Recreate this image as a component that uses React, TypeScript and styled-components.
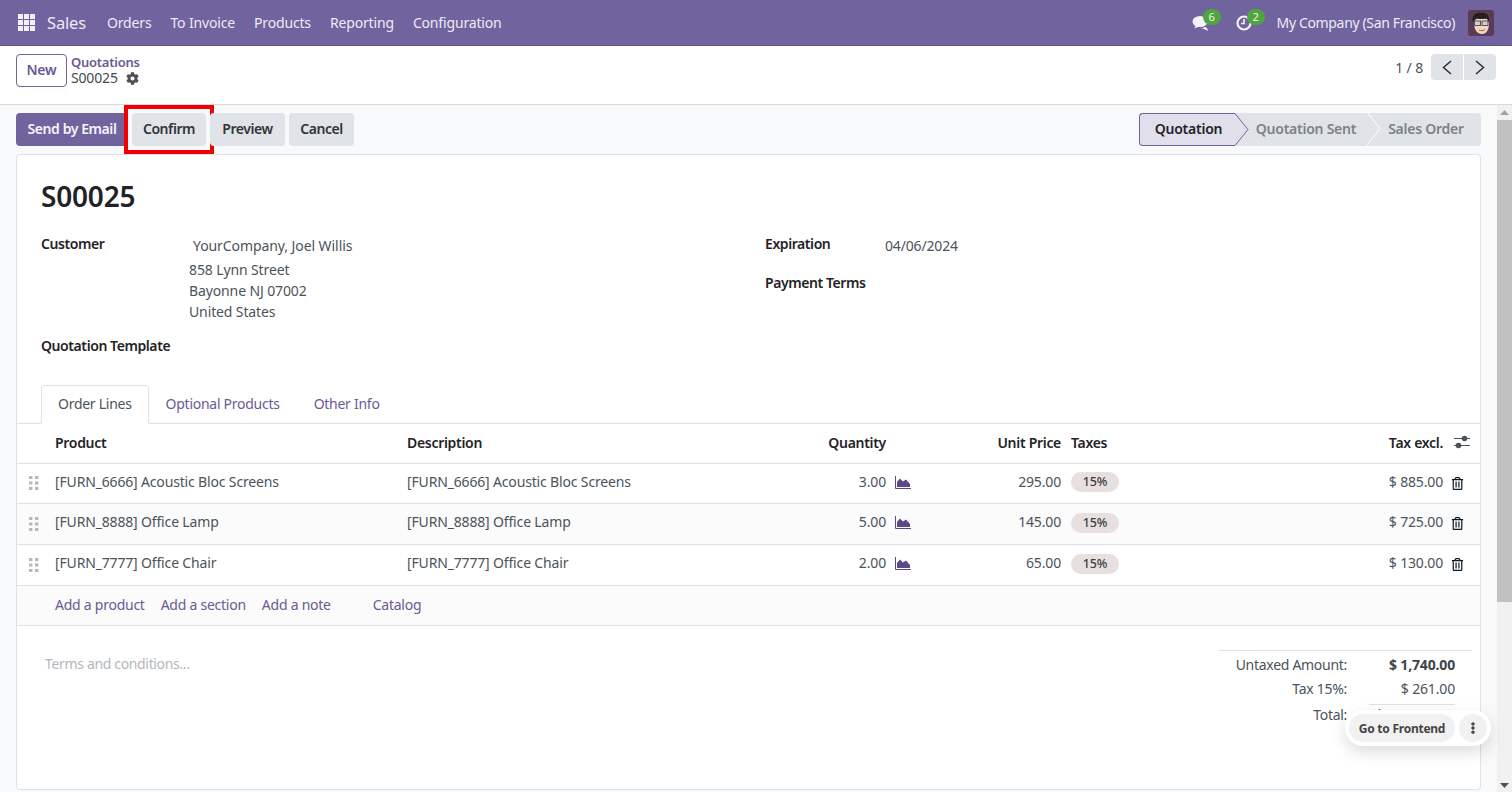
import React from "react";
import styled, { createGlobalStyle } from "styled-components";
import { FaCog, FaEllipsisV, FaRegTrashAlt } from "react-icons/fa";

const purple = "#71639e";
const linkPurple = "#6a5a94";
const text = "#4b535b";
const dark = "#1f2327";
const line = "#dee2e6";

const GlobalStyle = createGlobalStyle`
  * { box-sizing: border-box; }
  html, body { margin: 0; height: 100%; overflow: hidden; }
  body {
    font-family: "Noto Sans", "Open Sans", sans-serif;
    font-size: 14px;
    letter-spacing: -0.16px;
    color: ${text};
    background: #fff;
  }
`;

const Page = styled.div`
  width: 1512px;
  height: 792px;
  display: flex;
  flex-direction: column;
  position: relative;
  overflow: hidden;
`;

const Navbar = styled.header`
  height: 46px;
  flex: none;
  background: ${purple};
  border-bottom: 1px solid #64578e;
  display: flex;
  align-items: center;
  padding: 0 18px;
  color: #eeeaf5;
`;

const AppsIcon = styled.svg`
  width: 17px;
  height: 17px;
  fill: #f2eff7;
  margin-right: 12px;
`;

const Brand = styled.span`
  font-size: 16.5px;
  margin-right: 21px;
`;

const NavLinks = styled.nav`
  display: flex;
  gap: 19px;
`;

const NavLink = styled.span`
  font-size: 14px;
`;

const NavRight = styled.div`
  margin-left: auto;
  display: flex;
  align-items: center;
`;

const NavIcons = styled.div`
  display: flex;
  gap: 24px;
  margin-right: 21px;
`;

const NavIcon = styled.span`
  position: relative;
  display: flex;
  width: 20px;
  height: 18px;
`;

const Badge = styled.span`
  position: absolute;
  top: -5px;
  left: 11px;
  width: 18px;
  height: 16px;
  border-radius: 8px;
  background: #4fa53f;
  color: #f2f7ee;
  font-size: 11px;
  line-height: 15px;
  text-align: center;
`;

const CompanyName = styled.span`
  margin-right: 13px;
  letter-spacing: -0.35px;
`;

const ControlPanel = styled.div`
  height: 59px;
  flex: none;
  background: #fff;
  border-bottom: 1px solid #d8dadd;
  display: flex;
  align-items: flex-start;
  padding: 8px 16px 0;
`;

const NewButton = styled.button`
  height: 33px;
  width: 51px;
  border: 1px solid ${purple};
  border-radius: 4px;
  background: #fff;
  color: ${linkPurple};
  font: inherit;
  font-weight: 600;
  letter-spacing: inherit;
  padding: 0 0 2px;
`;

const Breadcrumb = styled.div`
  margin-left: 4px;
  display: flex;
  flex-direction: column;
  line-height: 16px;
`;

const CrumbLink = styled.span`
  color: ${linkPurple};
  font-weight: 600;
  font-size: 13px;
  letter-spacing: -0.25px;
`;

const CrumbCurrent = styled.span`
  display: flex;
  align-items: center;
  gap: 8px;
  color: #444b52;
`;

const Pager = styled.div`
  margin-left: auto;
  display: flex;
  align-items: center;
  gap: 8px;
  height: 26px;
`;

const PagerButtons = styled.div`
  display: flex;
  gap: 1px;
`;

const PagerButton = styled.span<{ $side: "left" | "right" }>`
  width: 32px;
  height: 26px;
  background: #e0e3e7;
  display: flex;
  align-items: center;
  justify-content: center;
  border-radius: ${(p) => (p.$side === "left" ? "4px 0 0 4px" : "0 4px 4px 0")};
`;

const Body = styled.div`
  flex: 1;
  min-height: 0;
  display: flex;
  background: #f8f9fb;
`;

const Main = styled.main`
  flex: 1;
  min-width: 0;
  padding: 8px 16px 2px;
  display: flex;
  flex-direction: column;
  gap: 8px;
`;

const StatusBar = styled.div`
  display: flex;
  justify-content: space-between;
  flex: none;
`;

const ActionButtons = styled.div`
  display: flex;
  gap: 4px;
`;

const ActionButton = styled.button<{ $width: number; $primary?: boolean }>`
  position: relative;
  width: ${(p) => p.$width}px;
  height: 33px;
  padding: 0 0 2px;
  border: 0;
  border-radius: 4px;
  font: inherit;
  font-weight: 600;
  letter-spacing: -0.42px;
  background: ${(p) => (p.$primary ? purple : "#e0e3e7")};
  color: ${(p) => (p.$primary ? "#f6f4fa" : "#2f353a")};
`;

const RedBox = styled.span`
  position: absolute;
  inset: -8px;
  border: 4px solid #f00000;
  pointer-events: none;
`;

const Steps = styled.div`
  display: flex;
  height: 33px;
  width: 342px;
  background: #e0e3e7;
  border-radius: 4px;
`;

const Step = styled.span<{ $width: number; $inset: number; $active?: boolean }>`
  position: relative;
  width: ${(p) => p.$width}px;
  display: flex;
  align-items: center;
  justify-content: center;
  padding: 0 0 2px ${(p) => p.$inset}px;
  font-weight: 600;
  letter-spacing: -0.25px;
  color: ${(p) => (p.$active ? dark : "#7b8289")};
  background: ${(p) => (p.$active ? "#e2dfec" : "transparent")};
  ${(p) => (p.$active ? `border: 1px solid ${purple}; border-right: 0; border-radius: 4px 0 0 4px;` : "")}
`;

const StepArrow = styled.svg`
  position: absolute;
  top: -1px;
  right: -14px;
  width: 14px;
  height: 33px;
  z-index: 1;
`;

const Sheet = styled.section`
  flex: 1;
  min-height: 0;
  background: #fff;
  border: 1px solid ${line};
  border-radius: 4px;
  display: flex;
  flex-direction: column;
`;

const Title = styled.h1`
  margin: 22px 0 0 24px;
  font-size: 28px;
  line-height: 38px;
  font-weight: 600;
  letter-spacing: -0.2px;
  color: ${dark};
`;

const FormGrid = styled.div`
  display: grid;
  grid-template-columns: 724px 1fr;
  padding: 0 24px;
  margin-top: 19px;
  height: 151px;
`;

const FormColumn = styled.div`
  display: flex;
  flex-direction: column;
`;

const Field = styled.div<{ $labelWidth: number; $height: number }>`
  display: grid;
  grid-template-columns: ${(p) => p.$labelWidth}px 1fr;
  height: ${(p) => p.$height}px;
`;

const Label = styled.span`
  font-weight: 600;
  letter-spacing: -0.42px;
  color: ${dark};
  line-height: 20px;
  white-space: nowrap;
`;

const CustomerName = styled.div`
  padding-left: 4px;
  line-height: 20px;
  letter-spacing: -0.08px;
  margin: 2px 0 3px;
`;

const Address = styled.div`
  line-height: 21px;
  letter-spacing: -0.12px;
`;

const FieldValue = styled.span`
  line-height: 20px;
  margin-top: 2px;
`;

const Tabs = styled.div`
  display: flex;
  padding-left: 24px;
  height: 39px;
  flex: none;
  border-bottom: 1px solid ${line};
`;

const Tab = styled.span<{ $active?: boolean }>`
  height: 39px;
  padding: 0 16px 2px;
  display: flex;
  align-items: center;
  border-radius: 4px 4px 0 0;
  letter-spacing: -0.27px;
  color: ${(p) => (p.$active ? text : linkPurple)};
  background: ${(p) => (p.$active ? "#fff" : "transparent")};
  border: 1px solid ${(p) => (p.$active ? line : "transparent")};
  border-bottom-color: ${(p) => (p.$active ? "#fff" : "transparent")};
`;

const Lines = styled.table`
  width: 1463px;
  table-layout: fixed;
  border-collapse: collapse;
  flex: none;
`;

const HeadCell = styled.th<{ $align?: string; $flush?: boolean }>`
  height: 39px;
  padding: 0 8px 2px;
  padding-left: ${(p) => (p.$flush ? "2px" : "8px")};
  text-align: ${(p) => p.$align || "left"};
  font-weight: 600;
  letter-spacing: -0.3px;
  color: ${dark};
  border-bottom: 1px solid ${line};
`;

const Row = styled.tr<{ $striped?: boolean }>`
  height: 41px;
  background: ${(p) => (p.$striped ? "#fbfbfb" : "#fff")};
  border-bottom: 1px solid ${line};
  &:first-child {
    height: 40px;
  }
`;

const Cell = styled.td<{ $align?: string; $flush?: boolean }>`
  padding: 0 8px 4px;
  padding-left: ${(p) => (p.$flush ? "2px" : "8px")};
  text-align: ${(p) => p.$align || "left"};
  white-space: nowrap;
`;

const TagCell = styled.td`
  padding: 0 0 2px 2px;
`;

const HandleCell = styled.td`
  padding: 0 0 2px;
`;

const IconCell = styled.td<{ $color: string }>`
  padding: 0 0 2px 1px;
  color: ${(p) => p.$color};
  svg {
    display: block;
  }
`;

const TrashCell = styled.td`
  padding: 0;
  color: #0c1a26;
  svg {
    display: block;
  }
`;

const TaxTag = styled.span`
  display: block;
  width: 48px;
  height: 20px;
  border-radius: 10px;
  background: #e7e0de;
  color: #3b4046;
  font-size: 12.5px;
  font-weight: 500;
  line-height: 20px;
  text-align: center;
`;

const HandleIcon = styled.svg`
  width: 10px;
  height: 14px;
  fill: #b5b9bd;
  display: block;
  margin: 2px 0 0 12px;
`;

const SlidersIcon = styled.svg`
  display: block;
  width: 16px;
  height: 14px;
  margin-left: -5px;
`;

const ChartIcon = styled.svg`
  width: 16px;
  height: 13px;
`;

const AddRow = styled.div`
  height: 40px;
  flex: none;
  display: flex;
  align-items: center;
  padding: 0 0 2px 38px;
  gap: 16px;
  letter-spacing: -0.25px;
  background: #fbfbfb;
  border-bottom: 1px solid ${line};
  color: ${linkPurple};
`;

const CatalogLink = styled.span`
  margin-left: 26px;
`;

const Footer = styled.div`
  flex: 1;
  min-height: 0;
  display: flex;
  justify-content: space-between;
  padding: 24px 8px 0 28px;
`;

const Terms = styled.span`
  color: #b4b7ba;
  line-height: 28px;
  letter-spacing: -0.34px;
`;

const Totals = styled.div`
  width: 253px;
  border-top: 1px solid ${line};
  padding: 2px 17px 0 0;
`;

const TotalRow = styled.div`
  display: grid;
  grid-template-columns: 128px 1fr;
  height: 24px;
  line-height: 24px;
  white-space: nowrap;
`;

const TotalLabel = styled.span`
  text-align: right;
  letter-spacing: -0.29px;
`;

const TotalValue = styled.span<{ $bold?: boolean; $large?: boolean }>`
  text-align: right;
  font-weight: ${(p) => (p.$bold ? 700 : 400)};
  font-size: ${(p) => (p.$large ? "17px" : "14px")};
  margin-top: ${(p) => (p.$large ? "2px" : "0")};
  color: ${(p) => (p.$bold ? "#3d444a" : text)};
`;

const TotalRule = styled.div`
  margin: 3px 0 -2px 150px;
  border-top: 1px solid ${line};
`;

const Scrollbar = styled.aside`
  width: 15px;
  flex: none;
  background: #f1f1f1;
  display: flex;
  flex-direction: column;
  align-items: center;
  justify-content: space-between;
  padding: 5px 0 4px;
`;

const ScrollArrow = styled.svg`
  width: 9px;
  height: 5px;
  fill: ${(p) => p.color};
`;

const ScrollThumb = styled.span`
  width: 100%;
  height: 482px;
  background: #c1c1c1;
  margin: 5px 0 auto;
`;

const FrontendPopup = styled.div`
  position: absolute;
  left: 1345px;
  top: 710px;
  width: 146px;
  height: 36px;
  background: #fff;
  border-radius: 18px;
  box-shadow: 0 6px 16px rgba(0, 0, 0, 0.14);
  display: flex;
  align-items: center;
  padding: 0 4px;
  gap: 4px;
`;

const FrontendButton = styled.span`
  width: 106px;
  height: 28px;
  border-radius: 14px;
  background: #f1f1f1;
  color: #444;
  font-size: 12px;
  font-weight: 700;
  letter-spacing: -0.25px;
  display: flex;
  align-items: center;
  justify-content: center;
`;

const MoreButton = styled.span`
  width: 28px;
  height: 28px;
  border-radius: 50%;
  background: #f1f1f1;
  color: #444;
  display: flex;
  align-items: center;
  justify-content: center;
`;

const Avatar = () => (
  <svg width="26" height="26" viewBox="0 0 26 26">
    <rect width="26" height="26" rx="3" fill="#5b3a56" />
    <path d="M6 12c0 8 3 12 8 12s7-5 7-11l-2-4H8z" fill="#f3d6c0" />
    <path d="M5 12C3 6 8 2 13 3c5-1 9 2 8 9l-2-4c-4 1-8 1-11 0z" fill="#23201f" />
    <rect x="6.5" y="11" width="6" height="4.5" fill="#cfcfcf" stroke="#555" />
    <rect x="14" y="11" width="6" height="4.5" fill="#cfcfcf" stroke="#555" />
    <path d="M11 20c2 1 4 1 6-.5" stroke="#9a5a4a" fill="none" />
  </svg>
);

const ChatIcon = () => (
  <svg width="20" height="18" viewBox="0 0 20 18" fill="#f5f3f8">
    <ellipse cx="8" cy="7.5" rx="7.5" ry="5.5" />
    <path d="M4 11l-1.5 3.5L8 12z" />
    <path d="M13 13c-2 1-3 1-5 1l3 .5 5 2.5-1-3z" />
  </svg>
);

const ClockIcon = () => (
  <svg width="20" height="18" viewBox="0 0 20 18" fill="none">
    <circle cx="8" cy="9" r="6.5" stroke="#f5f3f8" strokeWidth="2.2" />
    <path d="M8 5v4.5H5" stroke="#f5f3f8" strokeWidth="1.6" />
  </svg>
);

const Handle = () => (
  <HandleIcon viewBox="0 0 10 14">
    {[0, 5.5, 11].map((y) => (
      <React.Fragment key={y}>
        <rect x="0" y={y} width="3.4" height="3" />
        <rect x="6" y={y} width="3.4" height="3" />
      </React.Fragment>
    ))}
  </HandleIcon>
);

const orderLines = [
  { name: "[FURN_6666] Acoustic Bloc Screens", qty: "3.00", price: "295.00", total: "$ 885.00" },
  { name: "[FURN_8888] Office Lamp", qty: "5.00", price: "145.00", total: "$ 725.00" },
  { name: "[FURN_7777] Office Chair", qty: "2.00", price: "65.00", total: "$ 130.00" },
];

const navItems = ["Orders", "To Invoice", "Products", "Reporting", "Configuration"];

const App = () => (
  <Page>
    <GlobalStyle />
    <Navbar>
      <AppsIcon viewBox="0 0 17 17">
        {[0, 6, 12].flatMap((y) =>
          [0, 6, 12].map((x) => <rect key={`${x}-${y}`} x={x} y={y} width="5" height="5" />)
        )}
      </AppsIcon>
      <Brand>Sales</Brand>
      <NavLinks>
        {navItems.map((item) => (
          <NavLink key={item}>{item}</NavLink>
        ))}
      </NavLinks>
      <NavRight>
        <NavIcons>
          <NavIcon>
            <ChatIcon />
            <Badge>6</Badge>
          </NavIcon>
          <NavIcon>
            <ClockIcon />
            <Badge>2</Badge>
          </NavIcon>
        </NavIcons>
        <CompanyName>My Company (San Francisco)</CompanyName>
        <Avatar />
      </NavRight>
    </Navbar>

    <ControlPanel>
      <NewButton>New</NewButton>
      <Breadcrumb>
        <CrumbLink>Quotations</CrumbLink>
        <CrumbCurrent>
          S00025 <FaCog size={13} color="#4b4f53" />
        </CrumbCurrent>
      </Breadcrumb>
      <Pager>
        <span>1 / 8</span>
        <PagerButtons>
          <PagerButton $side="left">
            <svg width="10" height="15" viewBox="0 0 10 15" fill="none" stroke="#2a2f33" strokeWidth="1.5">
              <path d="M9 1L1.5 7.5L9 14" />
            </svg>
          </PagerButton>
          <PagerButton $side="right">
            <svg width="10" height="15" viewBox="0 0 10 15" fill="none" stroke="#2a2f33" strokeWidth="1.5">
              <path d="M1 1L8.5 7.5L1 14" />
            </svg>
          </PagerButton>
        </PagerButtons>
      </Pager>
    </ControlPanel>

    <Body>
      <Main>
        <StatusBar>
          <ActionButtons>
            <ActionButton $primary $width={112}>
              Send by Email
            </ActionButton>
            <ActionButton $width={74}>
              Confirm
              <RedBox />
            </ActionButton>
            <ActionButton $width={75}>Preview</ActionButton>
            <ActionButton $width={65}>Cancel</ActionButton>
          </ActionButtons>
          <Steps>
            <Step $active $width={96} $inset={2}>
              Quotation
              <StepArrow viewBox="0 0 14 33">
                <path d="M0 .5L13 16.5L0 32.5" fill="#e2dfec" stroke={purple} />
              </StepArrow>
            </Step>
            <Step $width={132} $inset={10}>
              Quotation Sent
              <StepArrow viewBox="0 0 14 33">
                <path d="M0 0L13 16.5L0 33" fill="none" stroke="#fff" />
              </StepArrow>
            </Step>
            <Step $width={114} $inset={4}>
              Sales Order
            </Step>
          </Steps>
        </StatusBar>

        <Sheet>
          <Title>S00025</Title>
          <FormGrid>
            <FormColumn>
              <Field $labelWidth={148} $height={102}>
                <Label>Customer</Label>
                <div>
                  <CustomerName>YourCompany, Joel Willis</CustomerName>
                  <Address>
                    858 Lynn Street
                    <br />
                    Bayonne NJ 07002
                    <br />
                    United States
                  </Address>
                </div>
              </Field>
              <Field $labelWidth={148} $height={30}>
                <Label>Quotation Template</Label>
              </Field>
            </FormColumn>
            <FormColumn>
              <Field $labelWidth={120} $height={39}>
                <Label>Expiration</Label>
                <FieldValue>04/06/2024</FieldValue>
              </Field>
              <Field $labelWidth={120} $height={30}>
                <Label>Payment Terms</Label>
              </Field>
            </FormColumn>
          </FormGrid>

          <Tabs>
            <Tab $active>Order Lines</Tab>
            <Tab>Optional Products</Tab>
            <Tab>Other Info</Tab>
          </Tabs>

          <Lines>
            <colgroup>
              <col width="30" />
              <col width="352" />
              <col width="381" />
              <col width="114" />
              <col width="23" />
              <col width="152" />
              <col width="261" />
              <col width="121" />
              <col width="29" />
            </colgroup>
            <thead>
              <tr>
                <HeadCell />
                <HeadCell>Product</HeadCell>
                <HeadCell>Description</HeadCell>
                <HeadCell $align="right">Quantity</HeadCell>
                <HeadCell />
                <HeadCell $align="right">Unit Price</HeadCell>
                <HeadCell $flush>Taxes</HeadCell>
                <HeadCell $align="right">Tax excl.</HeadCell>
                <HeadCell>
                  <SlidersIcon viewBox="0 0 16 14">
                    <path d="M0 3.5h16M0 10.5h16" stroke="#4b535b" strokeWidth="1.2" />
                    <circle cx="10.5" cy="3.5" r="2.8" fill="#4b535b" />
                    <circle cx="4.5" cy="10.5" r="2.8" fill="#4b535b" />
                  </SlidersIcon>
                </HeadCell>
              </tr>
            </thead>
            <tbody>
              {orderLines.map((item, i) => (
                <Row key={item.name} $striped={i === 1}>
                  <HandleCell>
                    <Handle />
                  </HandleCell>
                  <Cell>{item.name}</Cell>
                  <Cell>{item.name}</Cell>
                  <Cell $align="right">{item.qty}</Cell>
                  <IconCell $color="#5b4a8a">
                    <ChartIcon viewBox="0 0 16 13">
                      <path d="M.5 0v12.5H16" fill="none" stroke="currentColor" />
                      <path d="M2 11V6l3-3.5 3 3 3-2 4 4.5v3z" fill="currentColor" />
                    </ChartIcon>
                  </IconCell>
                  <Cell $align="right">{item.price}</Cell>
                  <TagCell>
                    <TaxTag>15%</TaxTag>
                  </TagCell>
                  <Cell $align="right">{item.total}</Cell>
                  <TrashCell>
                    <FaRegTrashAlt size={13} />
                  </TrashCell>
                </Row>
              ))}
            </tbody>
          </Lines>

          <AddRow>
            <span>Add a product</span>
            <span>Add a section</span>
            <span>Add a note</span>
            <CatalogLink>Catalog</CatalogLink>
          </AddRow>

          <Footer>
            <Terms>Terms and conditions...</Terms>
            <Totals>
              <TotalRow>
                <TotalLabel>Untaxed Amount:</TotalLabel>
                <TotalValue $bold>$ 1,740.00</TotalValue>
              </TotalRow>
              <TotalRow>
                <TotalLabel>Tax 15%:</TotalLabel>
                <TotalValue>$ 261.00</TotalValue>
              </TotalRow>
              <TotalRule />
              <TotalRow>
                <TotalLabel>Total:</TotalLabel>
                <TotalValue $bold $large>
                  $ 2,001.00
                </TotalValue>
              </TotalRow>
            </Totals>
          </Footer>
        </Sheet>
      </Main>
      <Scrollbar>
        <ScrollArrow viewBox="0 0 9 5" color="#a3a3a3">
          <path d="M4.5 0L9 5H0z" />
        </ScrollArrow>
        <ScrollThumb />
        <ScrollArrow viewBox="0 0 9 5" color="#505050">
          <path d="M0 0h9L4.5 5z" />
        </ScrollArrow>
      </Scrollbar>
    </Body>

    <FrontendPopup>
      <FrontendButton>Go to Frontend</FrontendButton>
      <MoreButton>
        <FaEllipsisV size={12} />
      </MoreButton>
    </FrontendPopup>
  </Page>
);

export default App;
